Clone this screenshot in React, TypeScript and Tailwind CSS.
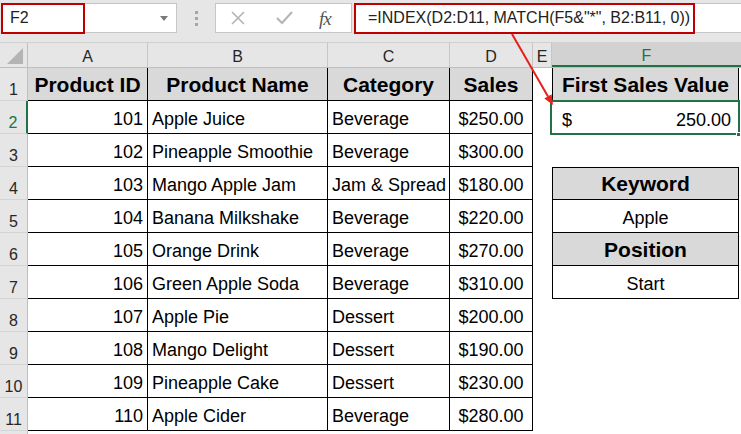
import React from "react";

const rows: [string, string, string, string][] = [
  ["101", "Apple Juice", "Beverage", "$250.00"],
  ["102", "Pineapple Smoothie", "Beverage", "$300.00"],
  ["103", "Mango Apple Jam", "Jam & Spread", "$180.00"],
  ["104", "Banana Milkshake", "Beverage", "$220.00"],
  ["105", "Orange Drink", "Beverage", "$270.00"],
  ["106", "Green Apple Soda", "Beverage", "$310.00"],
  ["107", "Apple Pie", "Dessert", "$200.00"],
  ["108", "Mango Delight", "Dessert", "$190.00"],
  ["109", "Pineapple Cake", "Dessert", "$230.00"],
  ["110", "Apple Cider", "Beverage", "$280.00"],
];

function RowHead({ n, active }: { n: number; active?: boolean }) {
  return (
    <div
      className={
        "w-[28px] shrink-0 h-full flex items-end justify-center pb-[1px] text-[16px] leading-[18px] bg-[#e6e6e6] border-b border-[#d4d4d4] " +
        (active
          ? "text-[#217346] border-r-2 border-r-[#217346]"
          : "text-[#262626] border-r border-r-[#bfbfbf]")
      }
    >
      {n}
    </div>
  );
}

function FCell({ row }: { row: number }) {
  if (row === 1)
    return (
      <div className="w-[187px] h-full bg-[#d9d9d9] border-l border-r border-b border-black flex items-end justify-center pb-[3px] text-[21px] leading-[24px] font-bold">
        First Sales Value
      </div>
    );
  if (row === 2)
    return (
      <div className="relative w-[187px] h-full flex items-end justify-between pb-[3px] px-[10px] pr-[8px] text-[18px] leading-[22px]">
        <span>$</span>
        <span>250.00</span>
        <div className="absolute left-[-2px] top-[-1px] w-[190px] h-[35px] border-2 border-[#217346]" />
        <div className="absolute left-[184px] top-[31px] w-[5px] h-[5px] bg-[#217346] border border-white" />
      </div>
    );
  if (row === 4 || row === 6)
    return (
      <div
        className={
          "w-[187px] h-full bg-[#d9d9d9] border-l border-r border-b border-black flex items-end justify-center pb-[3px] text-[21px] leading-[24px] font-bold " +
          (row === 4 ? "border-t" : "")
        }
      >
        {row === 4 ? "Keyword" : "Position"}
      </div>
    );
  if (row === 5 || row === 7)
    return (
      <div className="w-[187px] h-full border-l border-r border-b border-black flex items-end justify-center pb-[3px] text-[18px] leading-[22px]">
        {row === 5 ? "Apple" : "Start"}
      </div>
    );
  return <div className="w-[187px] h-full" />;
}

export default function App() {
  return (
    <div className="relative w-[741px] h-[434px] overflow-hidden bg-white text-black font-['Liberation_Sans',Arial,sans-serif]">
      {/* top bar */}
      <div className="h-[43px] bg-[#e6e6e6] flex items-start pt-[3px] border-b border-[#d0d0d0]">
        <div className="relative ml-[2px] w-[175px] h-[30px] bg-white border border-[#c6c6c6] flex items-center pl-[7px] text-[16px] text-[#222]">
          F2
          <svg className="absolute right-[8px] top-[12px]" width="8" height="5" viewBox="0 0 8 5">
            <path d="M0 0 L8 0 L4 5 Z" fill="#7a7a7a" />
          </svg>
          <div className="absolute left-[-2px] top-[-1px] w-[84px] h-[31px] border-2 border-[#c00000]" />
        </div>
        <div className="w-[38px] h-[30px] flex flex-col items-center justify-center gap-[3px]">
          <div className="w-[3px] h-[3px] bg-[#a6a6a6]" />
          <div className="w-[3px] h-[3px] bg-[#a6a6a6]" />
          <div className="w-[3px] h-[3px] bg-[#a6a6a6]" />
        </div>
        <div className="w-[137px] h-[30px] bg-white border border-[#c6c6c6] flex items-center">
          <svg className="ml-[14px]" width="16" height="16" viewBox="0 0 16 16">
            <path d="M2 2 L14 14 M14 2 L2 14" stroke="#b3b3b3" strokeWidth="1.6" fill="none" />
          </svg>
          <svg className="ml-[30px]" width="17" height="14" viewBox="0 0 17 14">
            <path d="M1 7 L6 12 L16 1" stroke="#b3b3b3" strokeWidth="2" fill="none" />
          </svg>
          <span className="ml-[26px] text-[19px] italic font-['Liberation_Serif',serif] text-[#555] leading-none tracking-[-1px]">
            fx
          </span>
        </div>
        <div className="relative ml-[2px] flex-1 h-[30px] bg-white border-y border-[#c6c6c6] flex items-center pl-[14px] text-[16px] text-[#222] whitespace-nowrap">
          =INDEX(D2:D11, MATCH(F5&amp;"*", B2:B11, 0))
          <div className="absolute left-[0px] top-[-1px] w-[341px] h-[31px] border-2 border-[#c00000]" />
        </div>
      </div>

      {/* column headers */}
      <div className="h-[25px] flex bg-[#e6e6e6] border-b border-[#bfbfbf] text-[16px] text-[#262626]">
        <div className="relative w-[28px] h-full border-r border-[#bfbfbf]">
          <svg className="absolute right-[4px] bottom-[3px]" width="16" height="16" viewBox="0 0 16 16">
            <path d="M16 0 L16 16 L0 16 Z" fill="#b4b4b4" />
          </svg>
        </div>
        <div className="w-[120px] h-full border-r border-[#c6c6c6] flex items-center justify-center pt-[3px]">A</div>
        <div className="w-[180px] h-full border-r border-[#c6c6c6] flex items-center justify-center pt-[3px]">B</div>
        <div className="w-[122px] h-full border-r border-[#c6c6c6] flex items-center justify-center pt-[3px]">C</div>
        <div className="w-[83px] h-full border-r border-[#c6c6c6] flex items-center justify-center pt-[3px]">D</div>
        <div className="w-[19px] h-full border-r border-[#c6c6c6] flex items-center justify-center pt-[3px]">E</div>
        <div className="w-[189px] h-full bg-[#d2d2d2] border-b-2 border-[#217346] text-[#217346] flex items-center justify-center pt-[3px]">F</div>
      </div>

      {/* row 1 */}
      <div className="h-[33px] flex">
        <RowHead n={1} />
        <div className="w-[120px] h-full bg-[#d9d9d9] border-r border-b border-black flex items-end justify-center pb-[3px] text-[21px] leading-[24px] font-bold">Product ID</div>
        <div className="w-[180px] h-full bg-[#d9d9d9] border-r border-b border-black flex items-end justify-center pb-[3px] text-[21px] leading-[24px] font-bold">Product Name</div>
        <div className="w-[122px] h-full bg-[#d9d9d9] border-r border-b border-black flex items-end justify-center pb-[3px] text-[21px] leading-[24px] font-bold">Category</div>
        <div className="w-[83px] h-full bg-[#d9d9d9] border-r border-b border-black flex items-end justify-center pb-[3px] text-[21px] leading-[24px] font-bold">Sales</div>
        <div className="w-[19px] h-full" />
        <FCell row={1} />
      </div>

      {rows.map((r, i) => (
        <div key={i} className="h-[33px] flex text-[18px] leading-[22px]">
          <RowHead n={i + 2} active={i === 0} />
          <div className="w-[120px] h-full border-r border-b border-black flex items-end justify-end pb-[3px] pr-[4px]">{r[0]}</div>
          <div className="w-[180px] h-full border-r border-b border-black flex items-end pb-[3px] pl-[4px] whitespace-nowrap">{r[1]}</div>
          <div className="w-[122px] h-full border-r border-b border-black flex items-end pb-[3px] pl-[4px] whitespace-nowrap">{r[2]}</div>
          <div className="w-[83px] h-full border-r border-b border-black flex items-end justify-center pb-[3px]">{r[3]}</div>
          <div className="w-[19px] h-full" />
          <FCell row={i + 2} />
        </div>
      ))}
      <div className="h-[10px] flex">
        <div className="w-[28px] h-full bg-[#e6e6e6] border-r border-[#bfbfbf]" />
      </div>

      {/* annotation arrow */}
      <svg className="absolute left-0 top-0 pointer-events-none" width="741" height="434" viewBox="0 0 741 434">
        <line x1="512" y1="34" x2="548" y2="96.5" stroke="#e8201a" strokeWidth="2" />
        <path d="M553 105 L544.3 98.5 L551.6 94.3 Z" fill="#e8201a" />
      </svg>
    </div>
  );
}
